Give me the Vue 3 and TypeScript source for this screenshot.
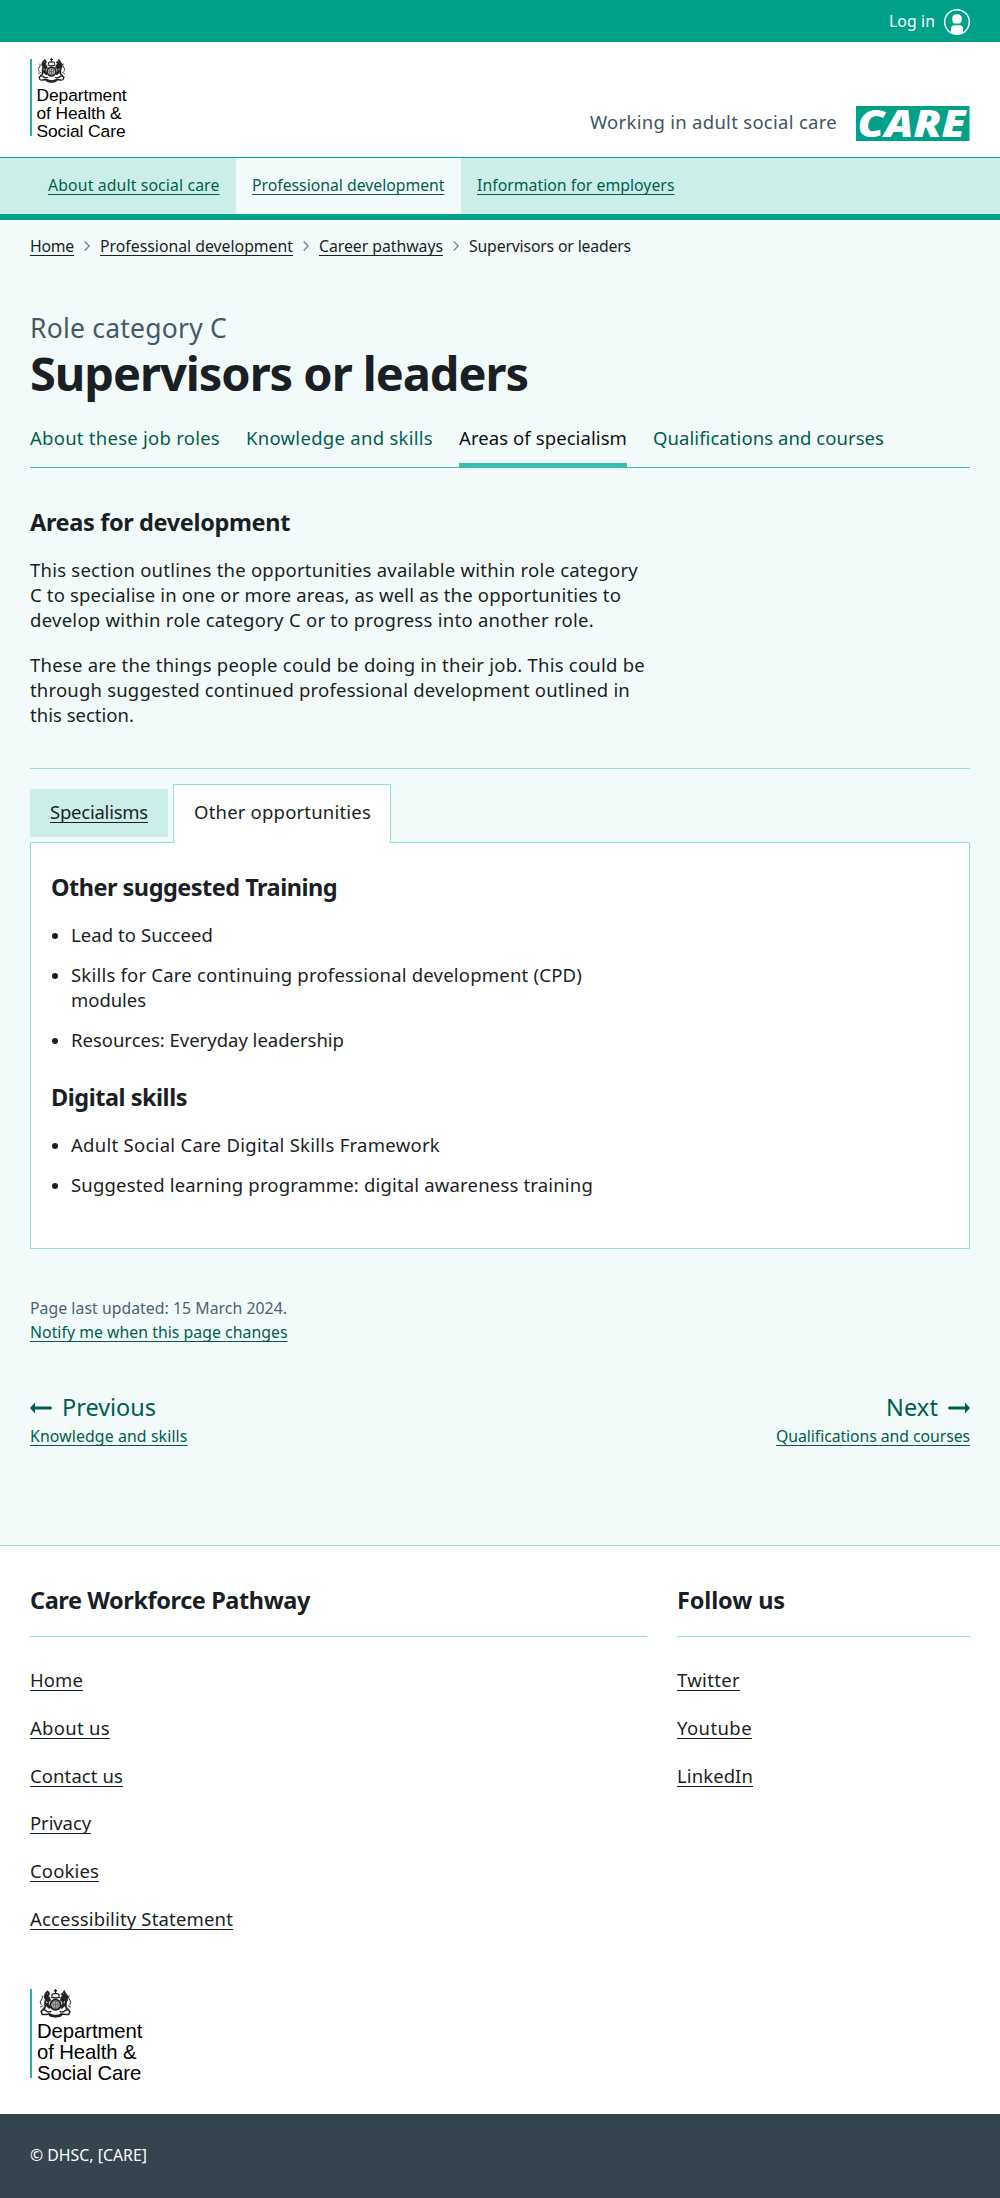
<script setup lang="ts">
import type { Directive } from 'vue'

// Tracks a line of text so that it sets to the given measure in pixels.
const vFit: Directive<HTMLElement, number> = {
  mounted(el, binding) {
    const range = document.createRange()
    range.selectNodeContents(el)
    const natural = range.getBoundingClientRect().width
    const count = (el.textContent ?? '').trim().length
    el.style.letterSpacing = `${((binding.value - natural) / count).toFixed(3)}px`
  },
}

interface Item {
  text: string
  width: number
  current?: boolean
}

const mainNav: Item[] = [
  { text: 'About adult social care', width: 171.5 },
  { text: 'Professional development', width: 192.5, current: true },
  { text: 'Information for employers', width: 197.5 },
]
const crumbs: Item[] = [
  { text: 'Home', width: 44 },
  { text: 'Professional development', width: 193 },
  { text: 'Career pathways', width: 124 },
]
const sections: Item[] = [
  { text: 'About these job roles', width: 190 },
  { text: 'Knowledge and skills', width: 187 },
  { text: 'Areas of specialism', width: 168, current: true },
  { text: 'Qualifications and courses', width: 231 },
]
const intro: Item[][] = [
  [
    { text: 'This section outlines the opportunities available within role category', width: 608 },
    { text: 'C to specialise in one or more areas, as well as the opportunities to', width: 591 },
    { text: 'develop within role category C or to progress into another role.', width: 564 },
  ],
  [
    { text: 'These are the things people could be doing in their job. This could be', width: 615 },
    { text: 'through suggested continued professional development outlined in', width: 600 },
    { text: 'this section.', width: 104 },
  ],
]
const training: Item[][] = [
  [{ text: 'Lead to Succeed', width: 142 }],
  [
    { text: 'Skills for Care continuing professional development (CPD)', width: 511 },
    { text: 'modules', width: 75 },
  ],
  [{ text: 'Resources: Everyday leadership', width: 273 }],
]
const digital: Item[][] = [
  [{ text: 'Adult Social Care Digital Skills Framework', width: 369 }],
  [{ text: 'Suggested learning programme: digital awareness training', width: 522 }],
]
const siteLinks: Item[] = [
  { text: 'Home', width: 53 },
  { text: 'About us', width: 80 },
  { text: 'Contact us', width: 93 },
  { text: 'Privacy', width: 61 },
  { text: 'Cookies', width: 69 },
  { text: 'Accessibility Statement', width: 203 },
]
const social: Item[] = [
  { text: 'Twitter', width: 63 },
  { text: 'Youtube', width: 75 },
  { text: 'LinkedIn', width: 76 },
]
const logoLines: Item[] = [
  { text: 'Department', width: 90 },
  { text: 'of Health &', width: 85 },
  { text: 'Social Care', width: 89 },
]
</script>

<template>
  <svg class="defs" width="0" height="0" aria-hidden="true">
    <symbol id="crest" viewBox="0 0 58 50">
      <g fill="none" stroke="#222" stroke-linecap="round" stroke-linejoin="round">
        <circle cx="29" cy="27" r="8.8" fill="#b5b5b5" stroke-width="3.2" />
        <path d="M25 22h8v7q-1 4-4 5q-3-1-4-5zM29 22v12M25 27h8" stroke="#555" stroke-width="1.3" />
        <path d="M22 14q7 3 14 0M23 12q-1-5 6-4q7-1 6 4M29 8V1M27 3h4" stroke-width="2.2" />
        <path d="M4 39q3-5 8-2q4 4 9 2M54 39q-3-5-8-2q-4 4-9 2M5 39q-1 6 6 5l8-1q-1 5 10 5t10-5l8 1q7 1 6-5" stroke-width="2.6" />
        <path d="M19 44q10 5 20 0" stroke-width="4" />
        <path d="M4 27q-4-5 1-9M5 18q3-3 1-6M54 27q4-5-1-9M53 18q-3-3-1-6M3 31l4-2M55 31l-4-2" stroke-width="1.6" />
      </g>
      <g fill="#222" stroke="#222" stroke-width="1">
        <path d="M12 6l3-3l3 2l1 4l-2 3l3 5l1 3l-3 1l-1 5l4 6l-3 2l-5-5l-2 5l-5 3l1-3l3-3l0-7l1-6l-2-5z" />
        <path d="M46 6l-2-4l-2 4l-4 3l3 2l-3 4l-1 5l3 1l1 5l-4 6l3 2l5-5l2 5l5 3l-1-3l-3-3l0-7l2-6l1-5z" />
      </g>
      <g fill="#fff"><path d="M13 20l2.5 3.5l-2 1.5zM45 20l-2.5 3.5l2 1.5z" /><circle cx="15" cy="8" r=".8" /><circle cx="43" cy="8" r=".8" /></g>
    </symbol>
  </svg>

  <div class="topbar">
    <a class="small" v-fit="46">Log in</a>
    <svg class="user" width="26" height="26" viewBox="0 0 26 26">
      <circle cx="13" cy="13" r="12.3" fill="none" stroke="#fff" stroke-width="1.4" />
      <path d="M9.3 6.5Q10 5.3 13 5.3T16.7 6.5Q18 7.5 17.8 10.5Q17.5 14.3 15.2 14.5H10.8Q8.5 14.3 8.2 10.5Q8 7.5 9.3 6.5Z" fill="#fff" />
      <path d="M7 24.3V19.5Q7.3 16.4 10.3 16.3H15.7Q18.7 16.4 19 19.5V24.3Q13 26.5 7 24.3Z" fill="#fff" />
    </svg>
  </div>

  <header class="header">
    <div class="dhsc">
      <svg class="crest"><use href="#crest" /></svg>
      <div v-for="l in logoLines" :key="l.text"><span v-fit="l.width">{{ l.text }}</span></div>
    </div>
    <div class="brand">
      <span class="strap" v-fit="247">Working in adult social care</span>
      <svg class="carelogo" width="114" height="35" viewBox="0 0 114 35">
        <rect width="113.5" height="35" fill="#00a188" />
        <text class="care" x="1.5" y="31" textLength="108" lengthAdjust="spacingAndGlyphs">CARE</text>
      </svg>
    </div>
  </header>

  <nav class="mainnav">
    <div v-for="i in mainNav" :key="i.text" :class="['navitem', { current: i.current }]">
      <a class="small link" v-fit="i.width">{{ i.text }}</a>
    </div>
  </nav>

  <main class="main">
    <div class="crumbs small">
      <template v-for="c in crumbs" :key="c.text">
        <a class="link" v-fit="c.width">{{ c.text }}</a>
        <svg width="6" height="10" viewBox="0 0 6 10"><path d="M.7.5L5.2 5L.7 9.5" fill="none" stroke="#6c7f8d" stroke-width="1.3" /></svg>
      </template>
      <span v-fit="162">Supervisors or leaders</span>
    </div>

    <div class="caption"><span v-fit="197">Role category C</span></div>
    <h1><span v-fit="498">Supervisors or leaders</span></h1>

    <div class="sections">
      <a v-for="s in sections" :key="s.text" :class="{ current: s.current }" :style="{ width: s.width + 'px' }"><span v-fit="s.width">{{ s.text }}</span></a>
    </div>

    <h2><span v-fit="260">Areas for development</span></h2>
    <p v-for="(p, n) in intro" :key="n">
      <template v-for="l in p" :key="l.text"><span v-fit="l.width">{{ l.text }}</span><br /></template>
    </p>

    <div class="tabs">
      <div class="tab"><a class="link" v-fit="98">Specialisms</a></div>
      <div class="tab open"><span v-fit="177">Other opportunities</span></div>
    </div>
    <div class="panel">
      <h2><span v-fit="286">Other suggested Training</span></h2>
      <ul>
        <li v-for="(item, n) in training" :key="n">
          <div v-for="l in item" :key="l.text"><span v-fit="l.width">{{ l.text }}</span></div>
        </li>
      </ul>
      <h2 class="second"><span v-fit="136">Digital skills</span></h2>
      <ul>
        <li v-for="(item, n) in digital" :key="n">
          <div v-for="l in item" :key="l.text"><span v-fit="l.width">{{ l.text }}</span></div>
        </li>
      </ul>
    </div>

    <div class="updated small">
      <div><span v-fit="257">Page last updated: 15 March 2024.</span></div>
      <div><a class="link green" v-fit="257.5">Notify me when this page changes</a></div>
    </div>

    <div class="pager">
      <div>
        <div class="dir">
          <svg width="22" height="12" viewBox="0 0 22 12"><path d="M0 6L5 .6V4.5H20.5Q22 4.6 22 6T20.5 7.5H5V11.4Z" fill="#005e50" /></svg>
          <span v-fit="94">Previous</span>
        </div>
        <div class="small"><a class="link" v-fit="157.5">Knowledge and skills</a></div>
      </div>
      <div class="right">
        <div class="dir">
          <span v-fit="52">Next</span>
          <svg width="22" height="12" viewBox="0 0 22 12"><path d="M22 6L17 .6V4.5H1.5Q0 4.6 0 6T1.5 7.5H17V11.4Z" fill="#005e50" /></svg>
        </div>
        <div class="small"><a class="link" v-fit="194">Qualifications and courses</a></div>
      </div>
    </div>
  </main>

  <footer class="footer">
    <div class="cols">
      <div class="wide">
        <h2><span v-fit="280">Care Workforce Pathway</span></h2>
        <div v-for="l in siteLinks" :key="l.text" class="flink"><a class="link" v-fit="l.width">{{ l.text }}</a></div>
      </div>
      <div class="narrow">
        <h2><span v-fit="108">Follow us</span></h2>
        <div v-for="l in social" :key="l.text" class="flink"><a class="link" v-fit="l.width">{{ l.text }}</a></div>
      </div>
    </div>
    <div class="dhsc big">
      <svg class="crest"><use href="#crest" /></svg>
      <div v-for="l in logoLines" :key="l.text"><span v-fit="l.width * 1.17">{{ l.text }}</span></div>
    </div>
  </footer>
  <div class="legal small"><span v-fit="117">© DHSC, [CARE]</span></div>
</template>

<style>
body {
  margin: 0;
  background: #fff;
  color: #1a1f25;
  font: 18.5px/25px "Noto Sans", "Open Sans", sans-serif;
}
</style>

<style scoped>
* { box-sizing: border-box; }
.defs { position: absolute; }
svg { display: block; flex: none; }
span, a { white-space: nowrap; }
.small { font-size: 15.8px; line-height: 24px; }
.link {
  text-decoration: underline;
  text-decoration-thickness: 1px;
  text-underline-offset: 3px;
  text-decoration-skip-ink: none;
}
.topbar {
  height: 42px;
  padding: 1px 30px 0 0;
  display: flex;
  justify-content: flex-end;
  align-items: center;
  gap: 9px;
  background: #00a188;
  color: #fff;
}
.topbar a { margin-top: -2px; }
.user { margin-top: 1px; }
.header {
  height: 116px;
  padding: 17px 30px 0;
  display: flex;
  justify-content: space-between;
  border-bottom: 1px solid #00a188;
}
.dhsc {
  height: 77px;
  border-left: 2px solid #1fb59f;
  padding-left: 4.5px;
  font: 17.4px/18px "Liberation Sans", Arial, sans-serif;
  color: #000;
}
.crest { width: 29px; height: 25px; margin: -1px 0 3px 0.5px; }
.brand { display: flex; align-items: flex-start; gap: 19px; padding-top: 47px; }
.strap { margin-top: 3px; color: #425563; line-height: 25px; }
.carelogo { overflow: visible; }
.care { font: italic 800 37px "Open Sans", "Noto Sans", sans-serif; fill: #fff; }
.mainnav {
  height: 62px;
  padding-left: 32px;
  display: flex;
  background: #cceee8;
  border-bottom: 6px solid #00a188;
}
.navitem { height: 56px; padding: 13px 16px 0; color: #005e50; }
.navitem:last-child { width: 230px; }
.navitem:nth-child(2) { width: 225px; }
.navitem:first-child { width: 204px; }
.current.navitem { background: #f2fbfa; }
.main { height: 1325px; padding: 14px 30px 0; background: #f2fbfa; }
.crumbs { display: flex; align-items: center; gap: 10px; }
.caption { margin-top: 52px; height: 36px; font-size: 26.5px; line-height: 36px; color: #425a6b; }
h1 { margin: 0; height: 54px; font-size: 47px; line-height: 54px; font-weight: 700; }
.caption span, h1 span { display: inline-block; }
h2 { margin: 0; font-size: 23.5px; line-height: 32px; font-weight: 700; }
.sections {
  margin: 25px 0 38px;
  height: 43px;
  display: flex;
  gap: 26px;
  box-shadow: inset 0 -1px #35bfac;
  color: #005e50;
}
.sections .current { color: #0c1014; border-bottom: 5px solid #35bfac; }
p { margin: 19px 0 20px; }
p + p { margin-top: 0; }
.tabs {
  margin-top: 41px;
  padding-top: 15px;
  display: flex;
  align-items: flex-start;
  gap: 5px;
  border-top: 1px solid #8edfd1;
}
.tab { margin-top: 5px; width: 138px; height: 48px; padding: 10px 20px 0; background: #cceee8; }
.tab.open {
  position: relative;
  width: 218px;
  height: 59px;
  margin: 0 0 -1px;
  padding: 14px 20px 0;
  background: #fff;
  border: 1px solid #8edfd1;
  border-bottom: 0;
}
.panel { height: 407px; padding: 28px 20px 0; background: #fff; border: 1px solid #8edfd1; }
ul { margin: 19px 0 0; padding: 0; list-style: none; display: flex; flex-direction: column; gap: 15px; }
li { position: relative; padding-left: 20px; }
li::before {
  content: "";
  position: absolute;
  left: 1px;
  top: 11px;
  width: 6px;
  height: 6px;
  border-radius: 50%;
  background: #1a1f25;
}
.second { margin-top: 29px; }
.updated { margin-top: 47px; color: #4c6272; }
.green { color: #005e50; }
.pager { margin-top: 47px; display: flex; justify-content: space-between; color: #005e50; }
.dir { height: 33px; display: flex; align-items: center; gap: 10px; font-size: 23.5px; line-height: 32px; }
.dir svg { margin-top: 1px; }
.dir span { margin-top: -1px; }
.right .dir { justify-content: flex-end; }
.footer { height: 569px; padding: 38px 30px 0; border-top: 1px solid #8edfd1; }
.cols { display: flex; gap: 30px; height: 406px; }
.wide { width: 617px; }
.narrow { width: 293px; }
.cols h2 { height: 53px; margin-bottom: 30px; border-bottom: 1px solid #8edfd1; }
.flink { height: 47.8px; }
.big { height: 89px; font-size: 20.3px; line-height: 21px; padding-left: 5px; }
.big .crest { width: 35px; height: 29px; margin-bottom: 3px; }
.legal { height: 84px; padding: 29px 30px 0; background: #34454f; color: #fff; }
</style>
